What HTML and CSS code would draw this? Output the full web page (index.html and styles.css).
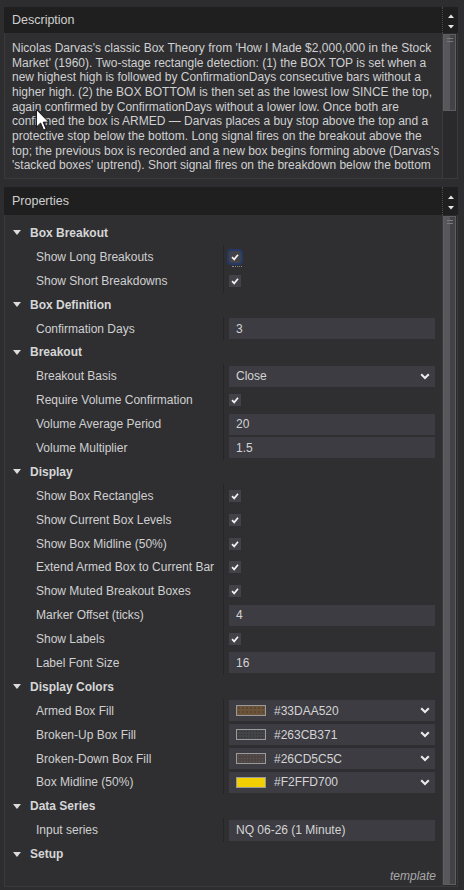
FILE: index.html
```html
<!DOCTYPE html>
<html>
<head>
<meta charset="utf-8">
<link rel="stylesheet" href="styles.css">
</head>
<body>
<section class="panel">
  <header class="phead phead-desc">
    <span class="ptitle">Description</span>
    <div class="spin">
      <svg width="8" height="22" viewBox="0 0 8 22"><path d="M1 9 L4 5.5 L7 9 Z" fill="#e4e4e4"/><path d="M1 16 L4 19.5 L7 16 Z" fill="#e4e4e4"/></svg>
    </div>
  </header>
  <div class="pbody desc-body">
    <div class="desc-text">
      <span>Nicolas Darvas's classic Box Theory from 'How I Made $2,000,000 in the Stock</span>
      <span>Market' (1960). Two-stage rectangle detection: (1) the BOX TOP is set when a</span>
      <span>new highest high is followed by ConfirmationDays consecutive bars without a</span>
      <span>higher high. (2) the BOX BOTTOM is then set as the lowest low SINCE the top,</span>
      <span>again confirmed by ConfirmationDays without a lower low. Once both are</span>
      <span>confirmed the box is ARMED — Darvas places a buy stop above the top and a</span>
      <span>protective stop below the bottom. Long signal fires on the breakout above the</span>
      <span>top; the previous box is recorded and a new box begins forming above (Darvas's</span>
      <span>'stacked boxes' uptrend). Short signal fires on the breakdown below the bottom</span>
    </div>
    <div class="vscroll"><div class="thumb thumb-short"><i></i><i></i></div></div>
  </div>
</section>

<section class="panel props">
  <header class="phead phead-props">
    <span class="ptitle">Properties</span>
    <div class="spin">
      <svg width="8" height="22" viewBox="0 0 8 22"><path d="M1 9 L4 5.5 L7 9 Z" fill="#e4e4e4"/><path d="M1 16 L4 19.5 L7 16 Z" fill="#e4e4e4"/></svg>
    </div>
  </header>
  <div class="pbody props-body">
    <div class="grid">
      <div class="cat"><b class="tri"></b>Box Breakout</div>
      <div class="items">
        <div class="prop"><span class="lbl">Show Long Breakouts</span><span class="val"><span class="chk focus"><svg viewBox="0 0 12 12"><path d="M3 6.2 L5.2 8.4 L9 3.8" /></svg></span></span></div>
        <div class="prop"><span class="lbl">Show Short Breakdowns</span><span class="val"><span class="chk"><svg viewBox="0 0 12 12"><path d="M3 6.2 L5.2 8.4 L9 3.8" /></svg></span></span></div>
      </div>

      <div class="cat"><b class="tri"></b>Box Definition</div>
      <div class="items">
        <div class="prop"><span class="lbl">Confirmation Days</span><span class="val"><span class="box">3</span></span></div>
      </div>

      <div class="cat"><b class="tri"></b>Breakout</div>
      <div class="items">
        <div class="prop"><span class="lbl">Breakout Basis</span><span class="val"><span class="box drop"><span class="dtext">Close</span><svg class="chev" viewBox="0 0 10 7"><path d="M1.2 1.2 L5 5 L8.8 1.2"/></svg></span></span></div>
        <div class="prop"><span class="lbl">Require Volume Confirmation</span><span class="val"><span class="chk"><svg viewBox="0 0 12 12"><path d="M3 6.2 L5.2 8.4 L9 3.8" /></svg></span></span></div>
        <div class="prop"><span class="lbl">Volume Average Period</span><span class="val"><span class="box">20</span></span></div>
        <div class="prop"><span class="lbl">Volume Multiplier</span><span class="val"><span class="box">1.5</span></span></div>
      </div>

      <div class="cat"><b class="tri"></b>Display</div>
      <div class="items">
        <div class="prop"><span class="lbl">Show Box Rectangles</span><span class="val"><span class="chk"><svg viewBox="0 0 12 12"><path d="M3 6.2 L5.2 8.4 L9 3.8" /></svg></span></span></div>
        <div class="prop"><span class="lbl">Show Current Box Levels</span><span class="val"><span class="chk"><svg viewBox="0 0 12 12"><path d="M3 6.2 L5.2 8.4 L9 3.8" /></svg></span></span></div>
        <div class="prop"><span class="lbl">Show Box Midline (50%)</span><span class="val"><span class="chk"><svg viewBox="0 0 12 12"><path d="M3 6.2 L5.2 8.4 L9 3.8" /></svg></span></span></div>
        <div class="prop"><span class="lbl">Extend Armed Box to Current Bar</span><span class="val"><span class="chk"><svg viewBox="0 0 12 12"><path d="M3 6.2 L5.2 8.4 L9 3.8" /></svg></span></span></div>
        <div class="prop"><span class="lbl">Show Muted Breakout Boxes</span><span class="val"><span class="chk"><svg viewBox="0 0 12 12"><path d="M3 6.2 L5.2 8.4 L9 3.8" /></svg></span></span></div>
        <div class="prop"><span class="lbl">Marker Offset (ticks)</span><span class="val"><span class="box">4</span></span></div>
        <div class="prop"><span class="lbl">Show Labels</span><span class="val"><span class="chk"><svg viewBox="0 0 12 12"><path d="M3 6.2 L5.2 8.4 L9 3.8" /></svg></span></span></div>
        <div class="prop"><span class="lbl">Label Font Size</span><span class="val"><span class="box">16</span></span></div>
      </div>

      <div class="cat"><b class="tri"></b>Display Colors</div>
      <div class="items">
        <div class="prop"><span class="lbl">Armed Box Fill</span><span class="val"><span class="box drop"><span class="swatch sw-armed"></span><span class="dtext">#33DAA520</span><svg class="chev" viewBox="0 0 10 7"><path d="M1.2 1.2 L5 5 L8.8 1.2"/></svg></span></span></div>
        <div class="prop"><span class="lbl">Broken-Up Box Fill</span><span class="val"><span class="box drop"><span class="swatch sw-up"></span><span class="dtext">#263CB371</span><svg class="chev" viewBox="0 0 10 7"><path d="M1.2 1.2 L5 5 L8.8 1.2"/></svg></span></span></div>
        <div class="prop"><span class="lbl">Broken-Down Box Fill</span><span class="val"><span class="box drop"><span class="swatch sw-down"></span><span class="dtext">#26CD5C5C</span><svg class="chev" viewBox="0 0 10 7"><path d="M1.2 1.2 L5 5 L8.8 1.2"/></svg></span></span></div>
        <div class="prop"><span class="lbl">Box Midline (50%)</span><span class="val"><span class="box drop"><span class="swatch sw-mid"></span><span class="dtext">#F2FFD700</span><svg class="chev" viewBox="0 0 10 7"><path d="M1.2 1.2 L5 5 L8.8 1.2"/></svg></span></span></div>
      </div>

      <div class="cat"><b class="tri"></b>Data Series</div>
      <div class="items">
        <div class="prop"><span class="lbl">Input series</span><span class="val"><span class="box">NQ 06-26 (1 Minute)</span></span></div>
      </div>

      <div class="cat"><b class="tri"></b>Setup</div>
      <div class="foot">template</div>
    </div>
    <div class="vscroll"><div class="thumb thumb-long"><i></i><i></i></div></div>
  </div>
</section>

<svg class="cursor" width="18" height="23" viewBox="0 0 13 21"><path d="M0.5 0.5 L0.5 16.5 L4.3 12.8 L7 19.3 L9.3 18.3 L6.7 12 L11.8 12 Z" fill="#ffffff" stroke="#111" stroke-width="0.9"/></svg>
</body>
</html>
```

FILE: styles.css
```css
html, body {
  margin: 0;
  padding: 0;
}

body {
  width: 464px;
  height: 890px;
  overflow: hidden;
  background: #2d2d30;
  font-family: "Liberation Sans", Arial, sans-serif;
  font-size: 12px;
  color: #d2d2d2;
  padding: 7px 0 0 4px;
  box-sizing: border-box;
  position: relative;
}

.panel {
  width: 454px;
}

.props {
  margin-top: 8px;
}

/* panel title bar with spinner arrows on the right */
.phead {
  display: flex;
  align-items: center;
  background: #1f1f20;
  padding-left: 8px;
  color: #cfcfcf;
  font-size: 12.5px;
}

.phead-desc {
  height: 26px;
}

.phead-props {
  height: 28px;
}

.ptitle {
  flex: 1;
}

.spin {
  align-self: stretch;
  width: 15px;
  display: flex;
  align-items: center;
  justify-content: center;
  border-left: 1px dotted #4c4c50;
}

.pbody {
  display: flex;
  background: #2f2f32;
  border: 1px solid #3a3a3e;
  border-top: none;
}

.desc-body {
  height: 145px;
}

.props-body {
  height: 671px;
}

/* description text, one line per span */
.desc-text {
  flex: 1;
  padding: 8px 0 0 7px;
  line-height: 14.67px;
  color: #d0d0d0;
  overflow: hidden;
  white-space: nowrap;
}

.desc-text span {
  display: block;
}

/* scrollbars */
.vscroll {
  width: 14px;
  background: #2a2a2d;
  border-left: 1px solid #3a3a3e;
  display: flex;
  flex-direction: column;
}

.thumb {
  margin: 1px 1px 0 0;
  background: linear-gradient(to right, #58585c 0, #58585c 6px, #434347 6px, #434347 12px);
  border: 1px solid #5e5e62;
  display: flex;
  flex-direction: column;
  align-items: center;
  padding-top: 3px;
  gap: 2px;
}

.thumb i {
  display: block;
  width: 6px;
  height: 1px;
  background: #7a7a7e;
}

.thumb-short {
  height: 72px;
}

.thumb-long {
  height: 664px;
}

/* property grid */
.grid {
  flex: 1;
  padding-top: 6px;
}

.cat {
  height: 23.9px;
  display: flex;
  align-items: center;
  font-weight: bold;
  color: #d6d6d6;
  padding-left: 8px;
}

.tri {
  width: 0;
  height: 0;
  border-left: 4px solid transparent;
  border-right: 4px solid transparent;
  border-top: 5px solid #dcdcdc;
  margin-right: 9px;
}

.prop {
  height: 23.9px;
  display: grid;
  grid-template-columns: 218px 1fr;
}

.lbl {
  display: flex;
  align-items: center;
  padding-left: 31px;
  color: #d0d0d0;
  white-space: nowrap;
}

.val {
  display: flex;
  align-items: center;
  border-left: 1px solid #252528;
  padding-left: 5px;
  padding-right: 7px;
}

/* checkbox */
.chk {
  width: 12px;
  height: 12px;
  background: #434248;
  position: relative;
  display: block;
}

.chk svg {
  width: 12px;
  height: 12px;
  display: block;
}

.chk path {
  fill: none;
  stroke: #f2f2f2;
  stroke-width: 1.7;
}

.chk.focus {
  outline: 2px solid #24396a;
  border-radius: 2px;
}

.chk.focus::after {
  content: "";
  position: absolute;
  left: 3px;
  top: 15px;
  width: 10px;
  border-bottom: 1px dotted #8a8a8a;
}

/* text and drop-down boxes */
.box {
  flex: 1;
  height: 21px;
  background: #3d3c43;
  display: flex;
  align-items: center;
  padding-left: 7px;
  color: #d4d4d4;
  box-sizing: border-box;
}

.drop {
  padding-right: 5px;
}

.dtext {
  flex: 1;
}

.chev {
  width: 10px;
  height: 7px;
}

.chev path {
  fill: none;
  stroke: #ececec;
  stroke-width: 2;
}

.swatch {
  width: 28px;
  height: 9px;
  border: 1px solid #9a9a9a;
  margin-right: 8px;
}

.sw-armed {
  background: radial-gradient(circle, #4a3a28 0.6px, transparent 0.8px) 0 0 / 4px 4px, #6c543a;
}

.sw-up {
  background: radial-gradient(circle, #303034 0.6px, transparent 0.8px) 0 0 / 3px 3px, #434447;
}

.sw-down {
  background: radial-gradient(circle, #6f5548 0.7px, transparent 0.9px) 0 0 / 3px 3px, #4c4545;
}

.sw-mid {
  background: #f1cf00;
}

.foot {
  text-align: right;
  font-style: italic;
  color: #a8a8a8;
  padding-right: 6px;
  margin-top: 3px;
}

/* mouse pointer resting over the description */
.cursor {
  position: absolute;
  left: 34px;
  top: 109px;
}
```
